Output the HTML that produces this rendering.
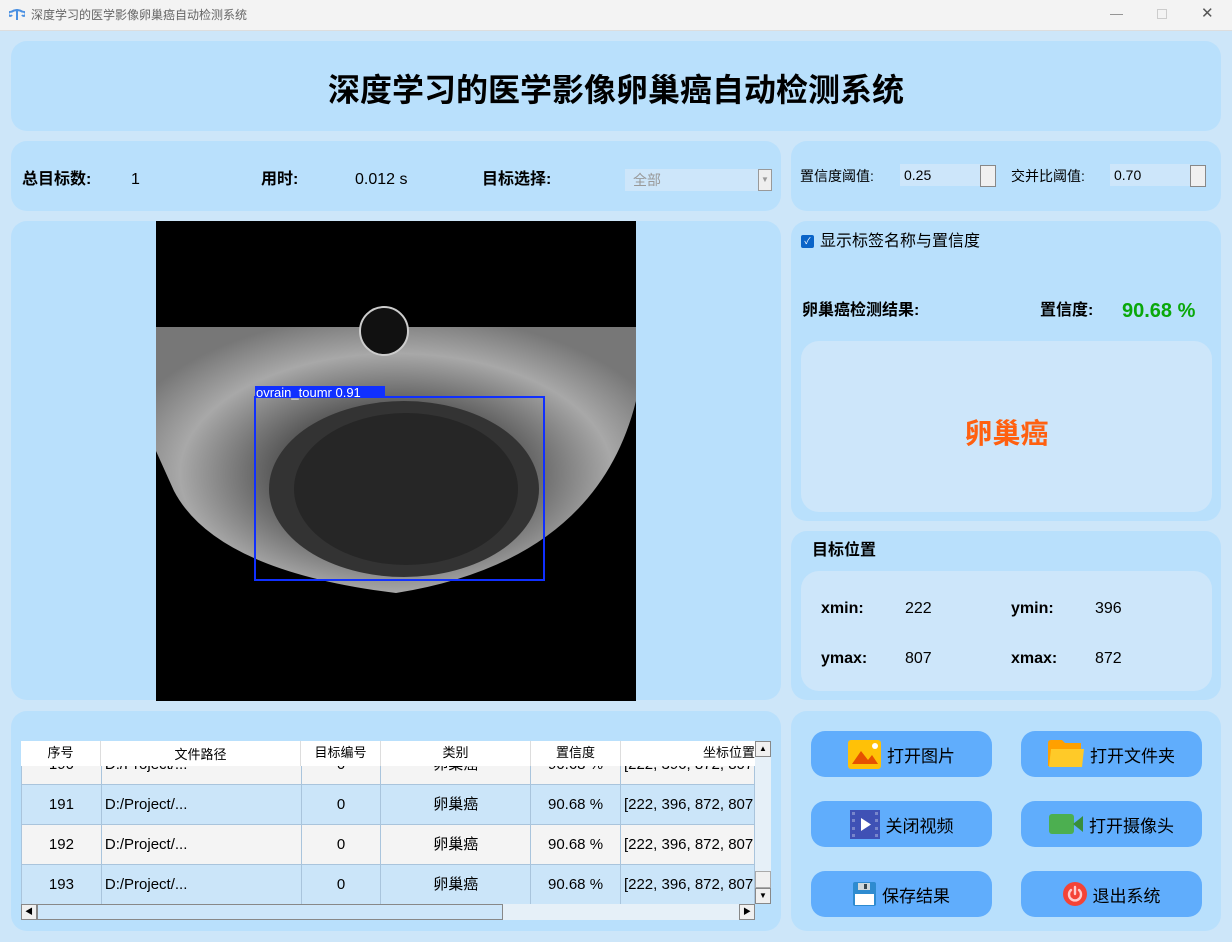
<!DOCTYPE html>
<html><head><meta charset="utf-8"><style>
*{margin:0;padding:0;box-sizing:border-box}
body{width:1232px;height:942px;background:#cde6f9;font-family:"Liberation Sans","Noto Sans CJK SC",sans-serif;position:relative;overflow:hidden;color:#000}
.abs{position:absolute;line-height:20px}
.p{position:absolute;background:#b9e0fc;border-radius:16px}
.in{position:absolute;background:#cde6fa;border-radius:18px}
.b{font-weight:bold}
.btn{position:absolute;width:181px;height:46px;background:#60adfc;border-radius:14px;font-size:17px;display:flex;align-items:center;justify-content:center;gap:6px}
table{border-collapse:collapse;font-size:15px}
td{border:1px solid #a9c4dc;text-align:center;height:40px}
.spin{position:absolute;width:16px;height:22px;background:#f0f0f0;border:1px solid #888}
</style></head><body>
<div class="abs" style="left:0;top:0;width:1232px;height:31px;background:#f3f3f3;border-bottom:1px solid #ddd"></div>
<svg class="abs" style="left:9px;top:9px" width="16" height="12" viewBox="0 0 16 12"><path d="M2 3 Q8 -1 14 3 M8 2 V11 M2 3 a2 2 0 1 0 1 3 M14 3 a2 2 0 1 1 -1 3" stroke="#4a90e2" stroke-width="2" fill="none"/></svg>
<div class="abs" style="left:31px;top:5px;font-size:12px;color:#666">深度学习的医学影像卵巢癌自动检测系统</div>
<div class="abs" style="left:1110px;top:4px;font-size:13px;color:#888">—</div>
<div class="abs" style="left:1157px;top:9px;width:10px;height:10px;border:1px solid #ccc"></div>
<div class="abs" style="left:1201px;top:4px;font-size:15px;color:#555">✕</div>

<div class="p" style="left:11px;top:41px;width:1210px;height:90px"></div>
<div class="abs b" style="left:0;width:1232px;top:70px;line-height:40px;text-align:center;font-size:32px">深度学习的医学影像卵巢癌自动检测系统</div>

<div class="p" style="left:11px;top:141px;width:770px;height:70px"></div>
<div class="abs b" style="left:22px;top:170px;font-size:16px">总目标数:</div>
<div class="abs" style="left:131px;top:170px;font-size:16px">1</div>
<div class="abs b" style="left:261px;top:170px;font-size:16px">用时:</div>
<div class="abs" style="left:355px;top:170px;font-size:16px">0.012 s</div>
<div class="abs b" style="left:482px;top:170px;font-size:16px">目标选择:</div>
<div class="abs" style="left:625px;top:169px;width:147px;height:22px;background:#cde6fa"><span style="position:absolute;left:8px;top:1px;font-size:14px;color:#999">全部</span><div style="position:absolute;right:0;top:0;width:14px;height:22px;background:#eee;border:1px solid #999;font-size:8px;color:#999;text-align:center;line-height:20px">▼</div></div>

<div class="p" style="left:791px;top:141px;width:430px;height:70px"></div>
<div class="abs" style="left:800px;top:166px;font-size:14px">置信度阈值:</div>
<div class="abs" style="left:900px;top:164px;width:80px;height:22px;background:#cde6fa;font-size:14px;padding:1px 0 0 4px">0.25</div>
<div class="spin" style="left:980px;top:165px"></div>
<div class="abs" style="left:1011px;top:166px;font-size:14px">交并比阈值:</div>
<div class="abs" style="left:1110px;top:164px;width:80px;height:22px;background:#cde6fa;font-size:14px;padding:1px 0 0 4px">0.70</div>
<div class="spin" style="left:1190px;top:165px"></div>

<div class="p" style="left:11px;top:221px;width:770px;height:479px"></div>
<svg class="abs" style="left:156px;top:221px" width="480" height="480" viewBox="0 0 480 480">
<defs><radialGradient id="g" cx="0.5" cy="0.55" r="0.6"><stop offset="0.4" stop-color="#555"/><stop offset="0.75" stop-color="#a8a8a8"/><stop offset="1" stop-color="#777"/></radialGradient></defs>
<rect width="480" height="480" fill="#000"/>
<path d="M0 106 H480 V180 Q440 340 240 372 Q60 350 18 270 L0 230 Z" fill="url(#g)"/>
<ellipse cx="248" cy="268" rx="135" ry="88" fill="#333"/>
<ellipse cx="250" cy="268" rx="112" ry="76" fill="#262626"/>
<circle cx="228" cy="110" r="24" fill="#111" stroke="#ccc" stroke-width="2"/>
<rect x="99" y="176" width="289" height="183" fill="none" stroke="#1030ff" stroke-width="2"/>
<rect x="99" y="165" width="130" height="12" fill="#1030ff"/>
<text x="100" y="176" fill="#fff" font-size="13" font-family="Liberation Sans">ovrain_toumr 0.91</text>
</svg>

<div class="p" style="left:791px;top:221px;width:430px;height:300px"></div>
<div class="abs" style="left:801px;top:235px;width:13px;height:13px;background:#0a64c8;border-radius:2px;color:#fff;font-size:9px;text-align:center;line-height:13px">✓</div>
<div class="abs" style="left:820px;top:232px;font-size:16px">显示标签名称与置信度</div>
<div class="abs b" style="left:802px;top:301px;font-size:16px">卵巢癌检测结果:</div>
<div class="abs b" style="left:1040px;top:301px;font-size:16px">置信度:</div>
<div class="abs b" style="left:1122px;top:301px;font-size:20px;color:#0aa80a">90.68 %</div>
<div class="in" style="left:801px;top:341px;width:411px;height:171px"></div>
<div class="abs b" style="left:801px;width:411px;top:418px;line-height:32px;text-align:center;font-size:28px;color:#ff6010">卵巢癌</div>

<div class="p" style="left:791px;top:531px;width:430px;height:169px"></div>
<div class="abs b" style="left:812px;top:541px;font-size:16px">目标位置</div>
<div class="in" style="left:801px;top:571px;width:411px;height:120px"></div>
<div class="abs b" style="left:821px;top:599px;font-size:16px">xmin:</div>
<div class="abs" style="left:905px;top:599px;font-size:16px">222</div>
<div class="abs b" style="left:1011px;top:599px;font-size:16px">ymin:</div>
<div class="abs" style="left:1095px;top:599px;font-size:16px">396</div>
<div class="abs b" style="left:821px;top:649px;font-size:16px">ymax:</div>
<div class="abs" style="left:905px;top:649px;font-size:16px">807</div>
<div class="abs b" style="left:1011px;top:649px;font-size:16px">xmax:</div>
<div class="abs" style="left:1095px;top:649px;font-size:16px">872</div>

<div class="p" style="left:11px;top:711px;width:770px;height:220px"></div>
<div class="abs" style="left:21px;top:741px;width:734px;height:163px;overflow:hidden">
<table style="position:absolute;left:0;top:3px;width:734px">
<colgroup><col style="width:80px"><col style="width:200px"><col style="width:80px"><col style="width:150px"><col style="width:90px"><col style="width:134px"></colgroup>
<tr style="background:#f4f4f4"><td>190</td><td style="text-align:left;padding-left:3px">D:/Project/...</td><td>0</td><td>卵巢癌</td><td>90.68 %</td><td style="text-align:left;padding-left:3px;white-space:nowrap">[222, 396, 872, 807</td></tr>
<tr style="background:#cbe5f9"><td>191</td><td style="text-align:left;padding-left:3px">D:/Project/...</td><td>0</td><td>卵巢癌</td><td>90.68 %</td><td style="text-align:left;padding-left:3px;white-space:nowrap">[222, 396, 872, 807</td></tr>
<tr style="background:#f4f4f4"><td>192</td><td style="text-align:left;padding-left:3px">D:/Project/...</td><td>0</td><td>卵巢癌</td><td>90.68 %</td><td style="text-align:left;padding-left:3px;white-space:nowrap">[222, 396, 872, 807</td></tr>
<tr style="background:#cbe5f9"><td>193</td><td style="text-align:left;padding-left:3px">D:/Project/...</td><td>0</td><td>卵巢癌</td><td>90.68 %</td><td style="text-align:left;padding-left:3px;white-space:nowrap">[222, 396, 872, 807</td></tr>
</table>
<div style="position:absolute;left:0;top:0;width:734px;height:25px;background:#fff;font-size:13px;display:flex;line-height:24px">
<div style="width:80px;text-align:center;border-right:1px solid #ddd">序号</div><div style="width:200px;text-align:center;border-right:1px solid #ddd;padding-top:2px">文件路径</div><div style="width:80px;text-align:center;border-right:1px solid #ddd">目标编号</div><div style="width:150px;text-align:center;border-right:1px solid #ddd">类别</div><div style="width:90px;text-align:center;border-right:1px solid #ddd">置信度</div><div style="width:134px;text-align:right;white-space:nowrap;overflow:hidden">坐标位置</div></div>
</div>
<div class="abs" style="left:755px;top:741px;width:16px;height:163px;background:#e6f0f8"><div style="height:16px;background:#f0f0f0;border:1px solid #888;font-size:8px;text-align:center;line-height:14px">▲</div><div style="position:absolute;top:130px;width:16px;height:17px;background:#f0f0f0;border:1px solid #aaa"></div><div style="position:absolute;bottom:0;width:16px;height:16px;background:#f0f0f0;border:1px solid #888;font-size:8px;text-align:center;line-height:14px">▼</div></div>
<div class="abs" style="left:21px;top:904px;width:734px;height:16px;background:#e6f0f8"><div style="position:absolute;left:0;width:16px;height:16px;background:#f0f0f0;border:1px solid #888;font-size:8px;text-align:center;line-height:14px">◀</div><div style="position:absolute;left:16px;width:466px;height:16px;background:#cde6fa;border:1px solid #888"></div><div style="position:absolute;right:0;width:16px;height:16px;background:#f0f0f0;border:1px solid #888;font-size:8px;text-align:center;line-height:14px">▶</div></div>

<div class="p" style="left:791px;top:711px;width:430px;height:220px"></div>
<div class="btn" style="left:811px;top:731px"><svg width="33" height="29"><rect width="33" height="29" rx="3" fill="#ffc107"/><path d="M4 24 L13 11 L20 20 L24 15 L30 24Z" fill="#e65100"/><circle cx="27" cy="6" r="3" fill="#fff"/></svg>打开图片</div>
<div class="btn" style="left:1021px;top:731px"><svg width="36" height="28"><path d="M0 3 Q0 0 3 0 H14 L17 3 H33 V26 H0Z" fill="#ffa000"/><path d="M3 9 H36 L34 27 H1Z" fill="#ffca28"/></svg>打开文件夹</div>
<div class="btn" style="left:811px;top:801px"><svg width="30" height="29"><rect width="30" height="29" fill="#3f51b5"/><path d="M11 8 L21 14.5 L11 21Z" fill="#fff"/><g fill="#7986cb"><rect x="2" y="2" width="3" height="3"/><rect x="2" y="9" width="3" height="3"/><rect x="2" y="17" width="3" height="3"/><rect x="2" y="24" width="3" height="3"/><rect x="25" y="2" width="3" height="3"/><rect x="25" y="9" width="3" height="3"/><rect x="25" y="17" width="3" height="3"/><rect x="25" y="24" width="3" height="3"/></g></svg>关闭视频</div>
<div class="btn" style="left:1021px;top:801px"><svg width="34" height="20"><rect width="25" height="20" rx="3" fill="#4caf50"/><path d="M24 10 L34 2 V18Z" fill="#388e3c"/></svg>打开摄像头</div>
<div class="btn" style="left:811px;top:871px"><svg width="23" height="24"><rect width="23" height="24" rx="2" fill="#2e8bd0"/><rect x="5" y="1" width="12" height="7" fill="#cfd8dc"/><rect x="11" y="2" width="3" height="5" fill="#37474f"/><rect x="2" y="12" width="19" height="11" fill="#fff"/></svg>保存结果</div>
<div class="btn" style="left:1021px;top:871px"><svg width="24" height="24"><circle cx="12" cy="12" r="12" fill="#f44336"/><path d="M8 8 A6 6 0 1 0 16 8 M12 5 V12" stroke="#fcc" stroke-width="2.4" fill="none" stroke-linecap="round"/></svg>退出系统</div>
</body></html>
